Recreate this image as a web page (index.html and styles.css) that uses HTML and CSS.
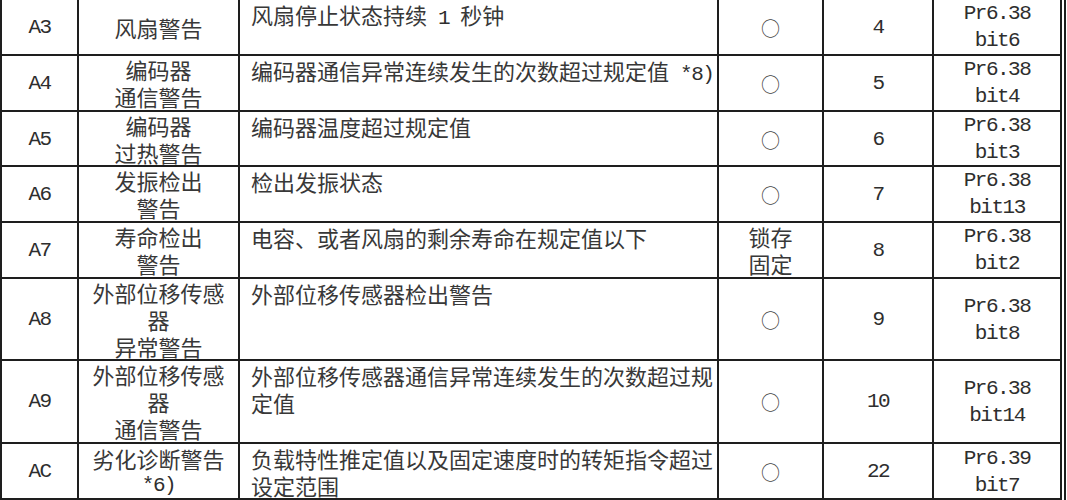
FILE: index.html
```html
<!DOCTYPE html>
<html lang="zh-CN">
<head>
<meta charset="utf-8">
<title>警告一览</title>
<link rel="stylesheet" href="styles.css">
</head>
<body>
<div class="table">
  <div class="row r56">
    <div class="cell code">A3</div>
    <div class="cell name">风扇警告</div>
    <div class="cell desc">风扇停止状态持续<span class="lat"> 1 </span>秒钟</div>
    <div class="cell mark"><span class="ring">○</span></div>
    <div class="cell num">4</div>
    <div class="cell par">Pr6.38<br>bit6</div>
  </div>
  <div class="row r56">
    <div class="cell code">A4</div>
    <div class="cell name">编码器<br>通信警告</div>
    <div class="cell desc">编码器通信异常连续发生的次数超过规定值<span class="lat"> *8)</span></div>
    <div class="cell mark"><span class="ring">○</span></div>
    <div class="cell num">5</div>
    <div class="cell par">Pr6.38<br>bit4</div>
  </div>
  <div class="row r55">
    <div class="cell code">A5</div>
    <div class="cell name">编码器<br>过热警告</div>
    <div class="cell desc">编码器温度超过规定值</div>
    <div class="cell mark"><span class="ring">○</span></div>
    <div class="cell num">6</div>
    <div class="cell par">Pr6.38<br>bit3</div>
  </div>
  <div class="row r56">
    <div class="cell code">A6</div>
    <div class="cell name">发振检出<br>警告</div>
    <div class="cell desc">检出发振状态</div>
    <div class="cell mark"><span class="ring">○</span></div>
    <div class="cell num">7</div>
    <div class="cell par">Pr6.38<br>bit13</div>
  </div>
  <div class="row r56">
    <div class="cell code">A7</div>
    <div class="cell name">寿命检出<br>警告</div>
    <div class="cell desc">电容、或者风扇的剩余寿命在规定值以下</div>
    <div class="cell mark">锁存<br>固定</div>
    <div class="cell num">8</div>
    <div class="cell par">Pr6.38<br>bit2</div>
  </div>
  <div class="row r82">
    <div class="cell code">A8</div>
    <div class="cell name">外部位移传感<br>器<br>异常警告</div>
    <div class="cell desc">外部位移传感器检出警告</div>
    <div class="cell mark"><span class="ring">○</span></div>
    <div class="cell num">9</div>
    <div class="cell par">Pr6.38<br>bit8</div>
  </div>
  <div class="row r83">
    <div class="cell code">A9</div>
    <div class="cell name">外部位移传感<br>器<br>通信警告</div>
    <div class="cell desc">外部位移传感器通信异常连续发生的次数超过规<br>定值</div>
    <div class="cell mark"><span class="ring">○</span></div>
    <div class="cell num">10</div>
    <div class="cell par">Pr6.38<br>bit14</div>
  </div>
  <div class="row r56">
    <div class="cell code">AC</div>
    <div class="cell name">劣化诊断警告<br><span class="lat">*6)</span></div>
    <div class="cell desc">负载特性推定值以及固定速度时的转矩指令超过<br>设定范围</div>
    <div class="cell mark"><span class="ring">○</span></div>
    <div class="cell num">22</div>
    <div class="cell par">Pr6.39<br>bit7</div>
  </div>
</div>
</body>
</html>
```
FILE: styles.css
```css
html, body {
  margin: 0;
  padding: 0;
  background: #ffffff;
}

.table {
  box-sizing: border-box;
  width: 1066px;
  display: flex;
  flex-direction: column;
  border-left: 2px solid #1e1e1e;
  border-right: 6px double #1e1e1e;
  font-family: "Noto Sans CJK SC", sans-serif;
  font-size: 22px;
  line-height: 27px;
  color: #383838;
}

.row {
  box-sizing: border-box;
  display: grid;
  grid-template-columns: 77px 161px 479px 105px 110px 126px;
  border-bottom: 2px solid #1e1e1e;
}

.r55 { height: 55px; }
.r56 { height: 56px; }
.r82 { height: 82px; }
.r83 { height: 83px; }

.cell {
  box-sizing: border-box;
  border-right: 2px solid #1e1e1e;
  display: flex;
  flex-direction: column;
  align-items: center;
  justify-content: center;
  text-align: center;
  white-space: nowrap;
}

.cell:last-child {
  border-right: none;
}

.code, .num, .par, .lat {
  font-family: "Liberation Mono", "Noto Sans CJK SC", monospace;
  font-size: 21px;
  letter-spacing: -1.5px;
  color: #2e2e2e;
}

.lat {
  white-space: pre;
}

.desc {
  display: block;
  text-align: left;
  padding: 1px 0 0 11px;
}

.ring {
  font-size: 19px;
  color: #444444;
}
```
